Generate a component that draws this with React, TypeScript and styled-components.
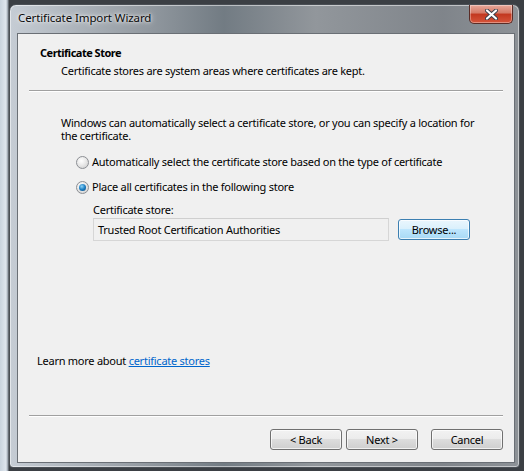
import React from "react";
import styled, { createGlobalStyle } from "styled-components";

const GlobalStyle = createGlobalStyle`
  html, body {
    margin: 0;
    padding: 0;
    width: 524px;
    height: 471px;
    overflow: hidden;
    background: #2f3236;
  }
  * {
    box-sizing: border-box;
  }
`;

const FONT = `"Noto Sans", "Open Sans", sans-serif`;

const Desktop = styled.div`
  width: 524px;
  height: 471px;
  display: flex;
  padding-top: 4px;
  background:
    linear-gradient(90deg, #c9d3de 0, #dfe6ee 6px, #8f98a3 8px, #3b3f44 9px, #3b3f44 100%);
  font-family: ${FONT};
  font-size: 11px;
  letter-spacing: -0.25px;
  color: #000;
`;

const Window = styled.div`
  margin-left: 9px;
  width: 511px;
  height: 464px;
  display: flex;
  flex-direction: column;
  border: 1px solid #4a4f55;
  border-radius: 7px 7px 4px 4px;
  background:
    linear-gradient(90deg, rgba(205, 212, 220, 0.95) 0, rgba(160, 167, 174, 0.9) 25%, rgba(120, 130, 138, 0.9) 42%, rgba(155, 160, 165, 0.9) 60%, rgba(135, 140, 146, 0.9) 85%, rgba(150, 155, 160, 0.9) 100%);
  box-shadow: inset 0 0 0 1px rgba(255, 255, 255, 0.5);
`;

const TitleBar = styled.div`
  height: 28px;
  display: flex;
  align-items: flex-start;
  justify-content: space-between;
  padding: 0 6px 0 8px;
`;

const Title = styled.span`
  margin-top: 5px;
  font-size: 11.5px;
  letter-spacing: -0.1px;
  color: #0a0a0a;
  text-shadow: 0 0 6px rgba(255, 255, 255, 0.9), 0 0 3px rgba(255, 255, 255, 0.9);
`;

const CloseButton = styled.div`
  width: 44px;
  height: 19px;
  display: flex;
  align-items: center;
  justify-content: center;
  border: 1px solid #5a2c26;
  border-top: none;
  border-radius: 0 0 5px 5px;
  background: linear-gradient(180deg, #e8a89a 0, #d47966 45%, #c2371f 50%, #d6553b 100%);
  box-shadow: inset 0 0 0 1px rgba(255, 255, 255, 0.35);
`;

const Client = styled.div`
  flex: 1;
  margin: 0 4px 4px 7px;
  display: flex;
  flex-direction: column;
  border: 1px solid #6a6f75;
  background: #f0f0f0;
`;

const Header = styled.div`
  display: flex;
  flex-direction: column;
  padding: 11px 0 0 22px;
`;

const StepTitle = styled.div`
  font-weight: bold;
  letter-spacing: -0.5px;
  line-height: 16px;
`;

const StepSubtitle = styled.div`
  padding-left: 21px;
  margin-top: 2px;
  line-height: 16px;
`;

const Separator = styled.div<{ $top: number }>`
  margin: ${({ $top }) => $top}px 11px 0 11px;
  height: 2px;
  border-top: 1px solid #a0a0a0;
  border-bottom: 1px solid #ffffff;
`;

const Body = styled.div`
  flex: 1;
  display: flex;
  flex-direction: column;
  padding: 24px 0 0 43px;
`;

const Paragraph = styled.div`
  width: 430px;
  line-height: 13px;
`;

const Options = styled.div`
  display: flex;
  flex-direction: column;
  gap: 11px;
  margin: 13px 0 0 15px;
`;

const RadioRow = styled.label`
  display: flex;
  align-items: center;
  gap: 3px;
  line-height: 14px;
`;

const RadioDot = styled.span<{ $checked?: boolean }>`
  width: 13px;
  height: 13px;
  border-radius: 50%;
  border: 1px solid #8c8f94;
  background: radial-gradient(circle at 40% 35%, #ffffff 0, #e9e9e9 45%, #c9c9c9 100%);
  display: flex;
  align-items: center;
  justify-content: center;
  &::after {
    content: "";
    display: ${({ $checked }) => ($checked ? "block" : "none")};
    width: 7px;
    height: 7px;
    border-radius: 50%;
    background: radial-gradient(circle at 40% 35%, #8fd3f5 0, #1b7fc4 50%, #0b3e6e 100%);
  }
`;

const StoreBlock = styled.div`
  display: flex;
  flex-direction: column;
  margin: 9px 0 0 32px;
`;

const StoreLabel = styled.div`
  line-height: 14px;
`;

const StoreRow = styled.div`
  display: flex;
  align-items: center;
  gap: 9px;
  margin-top: 1px;
`;

const StoreInput = styled.div`
  width: 296px;
  height: 23px;
  display: flex;
  align-items: center;
  padding-left: 4px;
  border: 1px solid #d6d6d6;
  border-top-color: #cfcfcf;
  background: #f0f0f0;
`;

const Button = styled.button<{ $focused?: boolean }>`
  height: 21px;
  width: 72px;
  padding: 0;
  font-family: ${FONT};
  font-size: 11px;
  letter-spacing: -0.25px;
  color: #000;
  border-radius: 3px;
  border: 1px solid ${({ $focused }) => ($focused ? "#3c7fb1" : "#707070")};
  background: ${({ $focused }) =>
    $focused
      ? "linear-gradient(180deg, #eaf6fd 0, #d9f0fc 50%, #bee6fd 50%, #a7d9f5 100%)"
      : "linear-gradient(180deg, #f2f2f2 0, #ebebeb 50%, #dddddd 50%, #cfcfcf 100%)"};
  box-shadow: inset 0 0 0 1px rgba(255, 255, 255, 0.7);
`;

const LearnMore = styled.div`
  margin: auto 0 47px 19px;
  line-height: 14px;
`;

const Link = styled.a`
  color: #0066cc;
  text-decoration: underline;
`;

const Footer = styled.div`
  display: flex;
  justify-content: flex-end;
  padding: 12px 11px 12px 0;
`;

const ButtonGroup = styled.div`
  display: flex;
  gap: 4px;
  margin-right: 13px;
`;

export default function App() {
  return (
    <>
      <GlobalStyle />
      <Desktop>
        <Window>
          <TitleBar>
            <Title>Certificate Import Wizard</Title>
            <CloseButton>
              <svg width="13" height="11" viewBox="0 0 13 11">
                <path
                  d="M2 1.5 L11 9.5 M11 1.5 L2 9.5"
                  stroke="#3a3f4a"
                  strokeWidth="4"
                  strokeLinecap="round"
                />
                <path
                  d="M2 1.5 L11 9.5 M11 1.5 L2 9.5"
                  stroke="#ffffff"
                  strokeWidth="2.2"
                  strokeLinecap="round"
                />
              </svg>
            </CloseButton>
          </TitleBar>
          <Client>
            <Header>
              <StepTitle>Certificate Store</StepTitle>
              <StepSubtitle>
                Certificate stores are system areas where certificates are kept.
              </StepSubtitle>
            </Header>
            <Separator $top={11} />
            <Body>
              <Paragraph>
                Windows can automatically select a certificate store, or you can specify a
                location for the certificate.
              </Paragraph>
              <Options>
                <RadioRow>
                  <RadioDot />
                  Automatically select the certificate store based on the type of certificate
                </RadioRow>
                <RadioRow>
                  <RadioDot $checked />
                  Place all certificates in the following store
                </RadioRow>
              </Options>
              <StoreBlock>
                <StoreLabel>Certificate store:</StoreLabel>
                <StoreRow>
                  <StoreInput>Trusted Root Certification Authorities</StoreInput>
                  <Button $focused>Browse...</Button>
                </StoreRow>
              </StoreBlock>
            </Body>
            <LearnMore>
              Learn more about <Link href="#">certificate stores</Link>
            </LearnMore>
            <Separator $top={0} />
            <Footer>
              <ButtonGroup>
                <Button>&lt; Back</Button>
                <Button>Next &gt;</Button>
              </ButtonGroup>
              <Button>Cancel</Button>
            </Footer>
          </Client>
        </Window>
      </Desktop>
    </>
  );
}
